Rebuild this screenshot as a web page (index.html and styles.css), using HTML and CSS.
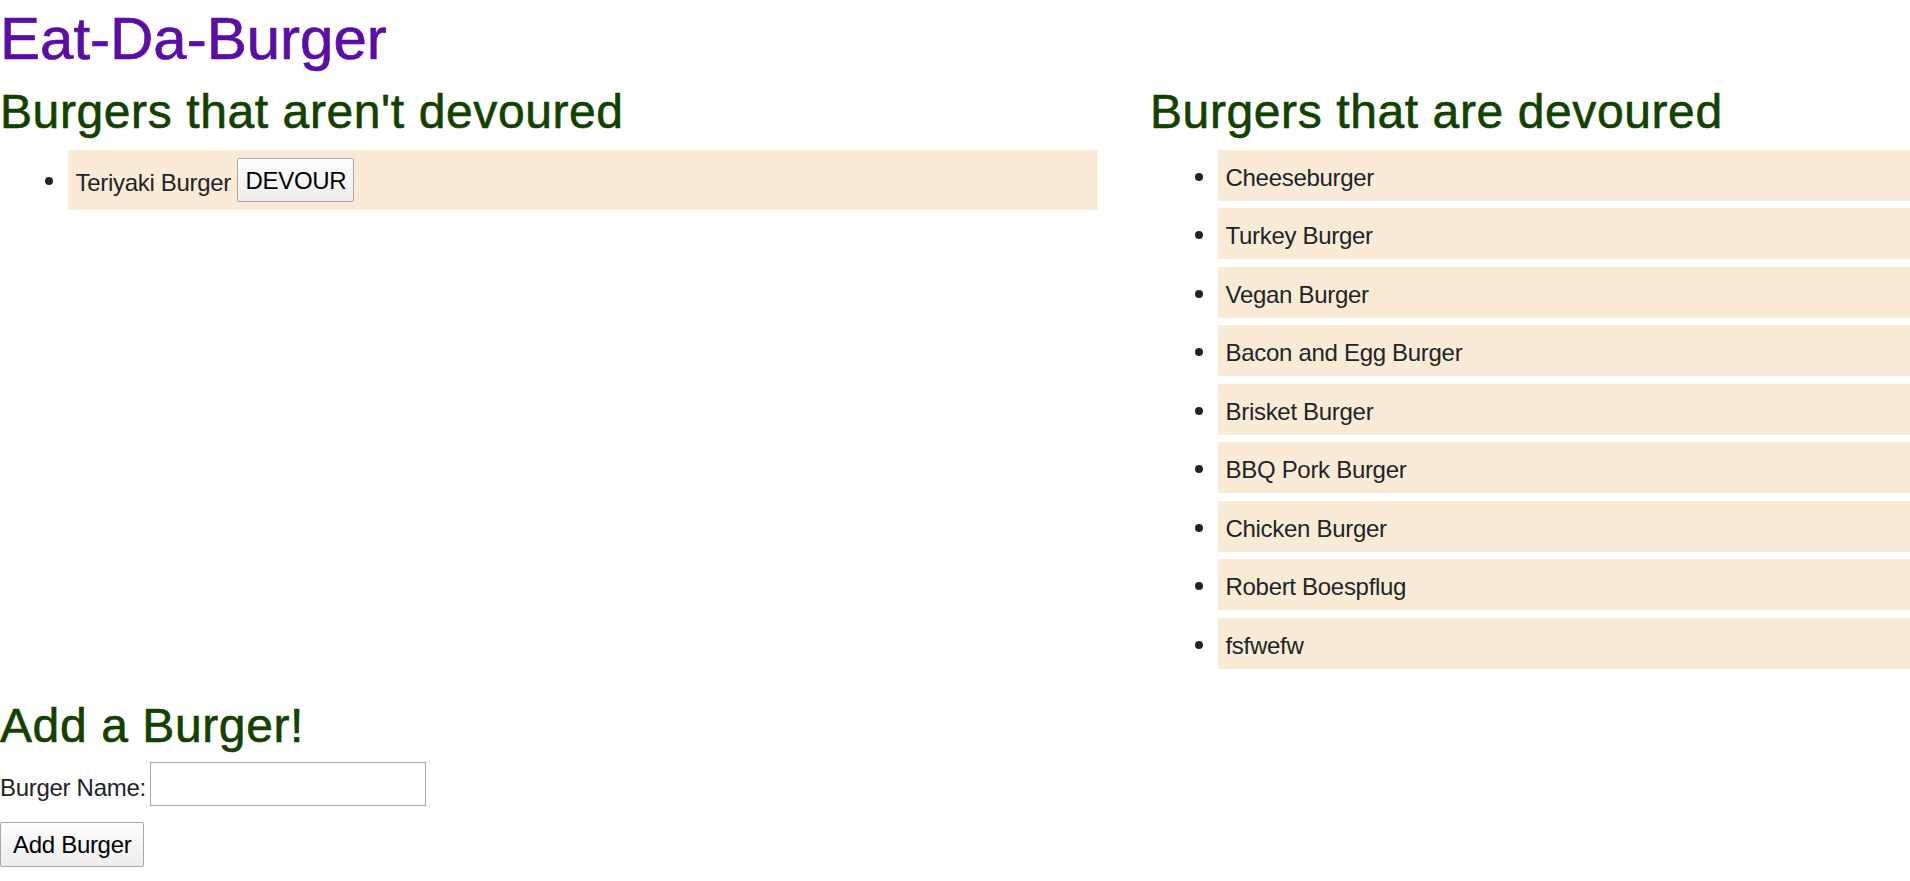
FILE: index.html
```html
<!DOCTYPE html>
<html lang="en">
<head>
<meta charset="utf-8">
<title>Eat-Da-Burger</title>
<link rel="stylesheet" href="styles.css">
</head>
<body>
<h1 class="title">Eat-Da-Burger</h1>
<div class="columns">
  <section class="col">
    <h2 class="heading">Burgers that aren't devoured</h2>
    <ul class="burger-list">
      <li class="burger burger-todo">Teriyaki Burger <button class="btn btn-devour" type="button">DEVOUR</button></li>
    </ul>
  </section>
  <section class="col">
    <h2 class="heading">Burgers that are devoured</h2>
    <ul class="burger-list">
      <li class="burger">Cheeseburger</li>
      <li class="burger">Turkey Burger</li>
      <li class="burger">Vegan Burger</li>
      <li class="burger">Bacon and Egg Burger</li>
      <li class="burger">Brisket Burger</li>
      <li class="burger">BBQ Pork Burger</li>
      <li class="burger">Chicken Burger</li>
      <li class="burger">Robert Boespflug</li>
      <li class="burger">fsfwefw</li>
    </ul>
  </section>
</div>
<h2 class="heading heading-add">Add a Burger!</h2>
<form class="add-form">
  <div class="field">
    <label class="field-label" for="burger-name">Burger Name:</label>
    <input class="field-input" id="burger-name" type="text">
  </div>
  <button class="btn btn-add" type="button">Add Burger</button>
</form>
</body>
</html>
```

FILE: styles.css
```css
html, body {
  margin: 0;
  padding: 0;
}

body {
  font-family: "Liberation Sans", Arial, sans-serif;
  font-size: 24px;
  line-height: 1.5;
  letter-spacing: -0.3px;
  color: #212529;
  background: #ffffff;
  overflow: hidden;
}

.title {
  margin: 3px 0 8px;
  font-size: 60px;
  line-height: 72px;
  font-weight: 400;
  letter-spacing: 0;
  color: #5b0ea6;
  -webkit-text-stroke: 0.7px #5b0ea6;
}

.heading {
  margin: 0 0 9.4px;
  font-size: 48px;
  line-height: 57.6px;
  font-weight: 400;
  letter-spacing: 0.6px;
  color: #124100;
  -webkit-text-stroke: 0.6px #124100;
}

.columns {
  display: grid;
  grid-template-columns: 1098px 1fr;
  column-gap: 52px;
}

.burger-list {
  margin: 0 0 27.6px;
  padding-left: 68px;
  list-style: none;
}

.burger {
  position: relative;
  background: #faebd7;
  padding: 10px 7.5px 5px;
  margin-bottom: 7.5px;
  line-height: 36px;
}

.burger::before {
  content: "";
  position: absolute;
  left: -23px;
  top: calc(50% - 2.5px);
  width: 8px;
  height: 8px;
  border-radius: 50%;
  background: #212529;
}

.burger-todo {
  padding: 8px 7.5px 2px;
  line-height: 50px;
}

.btn {
  font-family: inherit;
  font-size: 24px;
  line-height: 36px;
  letter-spacing: -0.3px;
  color: #000;
  background: linear-gradient(#fdfdfd, #ededed);
  border: 1px solid #a9a9a9;
  border-radius: 2px;
  margin: 0;
}

.btn-devour {
  vertical-align: top;
  padding: 4.5px 7px 1.5px;
}

.heading-add {
  margin-bottom: 7.8px;
}

.add-form {
  margin: 0;
}

.field {
  display: flex;
  align-items: flex-end;
  gap: 4px;
  height: 44px;
}

.field-label {
  line-height: 36px;
}

.field-input {
  box-sizing: border-box;
  width: 276px;
  height: 44px;
  border: 1px solid #a9a9a9;
  margin: 0;
  padding: 2px 4px;
  font-family: inherit;
  font-size: 24px;
}

.btn-add {
  display: block;
  margin-top: 16px;
  padding: 4.5px 12px 2.5px;
}
```
